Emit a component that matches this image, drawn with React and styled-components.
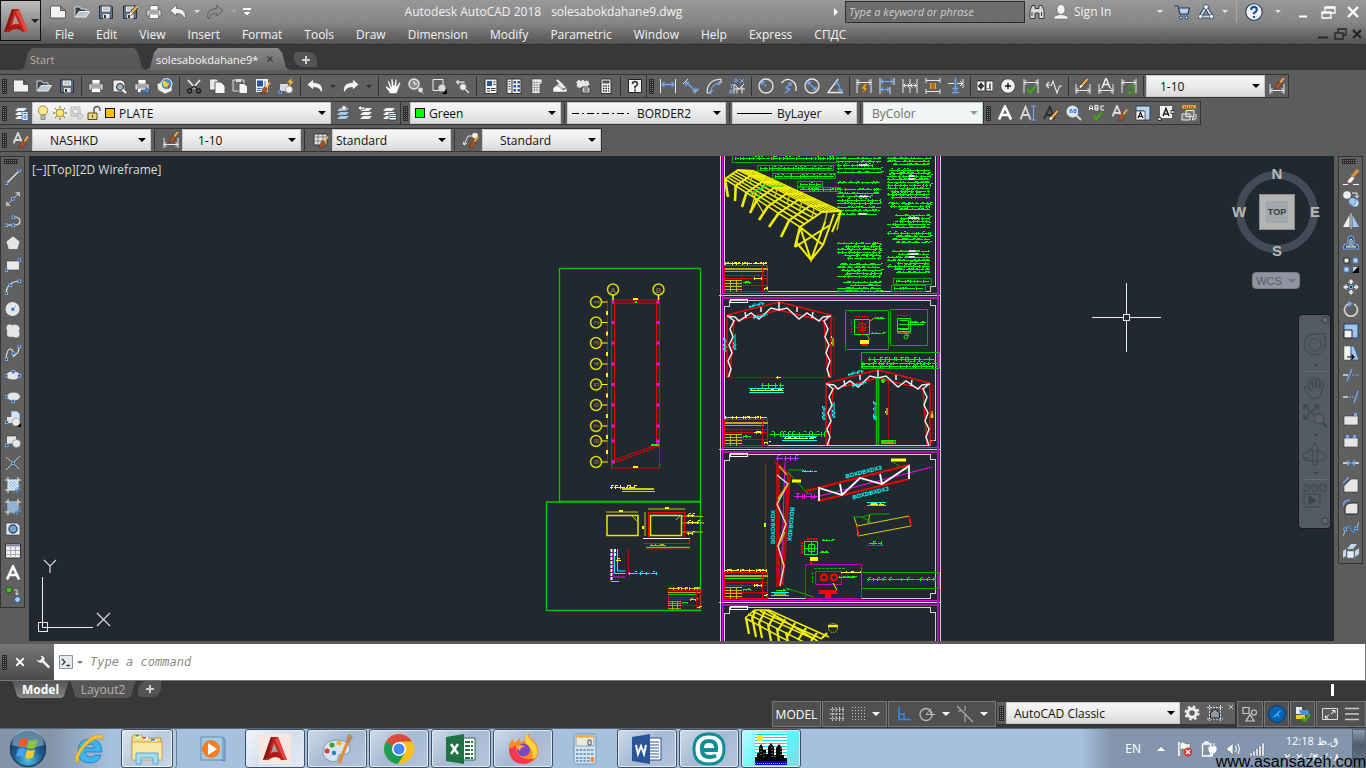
import React from "react";
import styled, { createGlobalStyle } from "styled-components";

const GlobalStyle = createGlobalStyle`
  * { box-sizing: border-box; }
  body {
    margin: 0;
    background: #383838;
    font-family: "Open Sans", "Noto Sans", sans-serif;
    font-size: 12px;
    color: #f2f2f2;
  }
  button, input, select { font: inherit; color: inherit; margin: 0; }
  button {
    padding: 0;
    border: 0;
    background: none;
    display: flex;
    align-items: center;
    justify-content: center;
  }
  svg { flex: none; display: block; }
`;

const Screen = styled.div`
  min-height: 100vh;
  display: flex;
  flex-direction: column;
  overflow: hidden;
`;

const Caret = styled.span`
  flex: none;
  width: 0;
  border: ${(p) => (p.$big ? 4 : 3)}px solid transparent;
  border-top-color: ${(p) => p.$color};
  border-bottom: 0;
`;

const TitleBar = styled.header`
  display: flex;
  height: 45px;
  border-bottom: 1px solid #2c2c2c;
  background: repeating-linear-gradient(135deg, rgba(255, 255, 255, 0.05) 0 1px, transparent 1px 3px),
    linear-gradient(#969696, #858585 50%, #505050);
`;

const AppButton = styled.button`
  && {
    width: 41px;
    height: 41px;
    gap: 2px;
    border: 1px solid #111;
    background: linear-gradient(#bdbdbd, #8d8d8d 60%, #6c6c6c);
  }
`;

const TitleRows = styled.div`
  flex: 1;
  min-width: 0;
`;

const TitleRow = styled.div`
  display: flex;
  align-items: center;
  height: 23px;
  &:last-child { height: 22px; }
`;

const QuickAccess = styled.div`
  display: flex;
  align-items: center;
  padding-left: 5px;
`;

const QuickButton = styled.button`
  width: 24px;
  height: 22px;
`;

const HelpButton = styled(QuickButton)`
  && { width: 34px; }
`;

const Drop = styled.button`
  width: 13px;
  height: 20px;
`;

const Customize = styled.span`
  width: 8px;
  height: 7px;
  border-top: 2px solid #fff;
  background: linear-gradient(#fff, #fff) center 2px / 6px 1px no-repeat,
    linear-gradient(#fff, #fff) center 3px / 4px 1px no-repeat,
    linear-gradient(#fff, #fff) center 4px / 2px 1px no-repeat;
`;

const Title = styled.h1`
  flex: 1;
  display: flex;
  justify-content: center;
  gap: 10px;
  margin: 0;
  font-size: 12px;
  font-weight: 400;
  white-space: nowrap;
`;

const SearchArrow = styled.span`
  border: 4px solid transparent;
  border-left-color: #fff;
  border-right: 0;
  margin-right: 7px;
`;

const Search = styled.input`
  && {
    width: 180px;
    height: 22px;
    padding: 0 3px;
    border: 1px solid #2e2e2e;
    background: #6c6c6c;
    font-size: 11px;
    font-style: italic;
  }
  &::placeholder { color: #cfcfcf; opacity: 1; }
`;

const SignIn = styled.button`
  && {
    width: 121px;
    gap: 5px;
    justify-content: flex-start;
    padding: 0 7px 0 4px;
  }
  span:nth-child(2) { flex: 1; text-align: left; white-space: nowrap; }
`;

const Rule = styled.span`
  width: 1px;
  height: 22px;
  margin-left: 5px;
  background: #a8a8a8;
`;

const WindowButtons = styled.div`
  display: flex;
  gap: ${(p) => p.$gap}px;
  margin-left: auto;
  padding-right: ${(p) => (p.$gap > 1 ? 5 : 1)}px;
  padding-left: 11px;
`;

const MenuBar = styled.nav`
  display: flex;
  padding-left: 3px;
`;

const MenuItem = styled.button`
  && {
    padding: 0 11px;
    white-space: nowrap;
  }
`;

const FileTabs = styled.div`
  display: flex;
  align-items: flex-end;
  height: 25px;
  padding-left: 20px;
  background: #383838;
`;

const FileTab = styled.button`
  && {
    width: ${(p) => p.$width}px;
    height: 22px;
    justify-content: flex-start;
    gap: 8px;
    padding-left: 10px;
    font-size: 11px;
    color: ${(p) => (p.$active ? "#f6f6f6" : "#b9adad")};
    background: ${(p) => (p.$active ? "linear-gradient(#8a8a8a, #666)" : "linear-gradient(#5c5c5c, #545454)")};
    clip-path: polygon(0 100%, 4px 90%, 8px 20%, 12px 0, calc(100% - 12px) 0, calc(100% - 8px) 20%, calc(100% - 4px) 90%, 100% 100%);
  }
`;

const AddTab = styled.button`
  && {
    width: 23px;
    height: ${(p) => (p.$low ? 16 : 15)}px;
    margin: ${(p) => (p.$low ? "0 0 0 1px" : "0 0 3px 4px")};
    background: #545454;
    border-radius: ${(p) => (p.$low ? "9px 0 9px 3px" : "3px 9px 0 9px")};
  }
`;

const Toolbars = styled.div`
  display: flex;
  flex-direction: column;
  gap: 3px;
  height: 85px;
  padding-top: 4px;
  background: #5c5c5c;
`;

const ToolbarRow = styled.div`
  display: flex;
`;

const Toolbar = styled.div`
  display: flex;
  align-items: center;
  height: 24px;
  border: 1px solid #333;
  border-left-width: 0;
  background: #606060;
`;

const Handle = styled.span`
  flex: none;
  width: ${(p) => (p.$flat ? 14 : 5)}px;
  height: ${(p) => (p.$flat ? 5 : 15)}px;
  margin: ${(p) => (p.$flat ? "2px 0 2px 3px" : "0 2px")};
  background: repeating-linear-gradient(90deg, #2a2a2a 0 1px, transparent 1px 2px),
    repeating-linear-gradient(#2a2a2a 0 1px, #777 1px 2px);
`;

const ToolButton = styled.button`
  width: 23px;
  height: 22px;
`;

const Sep = styled.span`
  flex: none;
  width: 1px;
  height: 20px;
  margin: 0 ${(p) => (p.$wide ? 4 : 2)}px 0 3px;
  background: #333;
`;

const ComboBox = styled.div`
  display: flex;
  align-items: center;
  width: ${(p) => p.$width}px;
  height: 22px;
  padding: 0 4px 0 2px;
  border: 1px solid #c9c9c9;
  background: ${(p) => (p.$disabled ? "#f2f5f5" : "linear-gradient(#f6f6f6, #ececec 50%, #d8dadb)")};
  color: ${(p) => (p.$disabled ? "#6e6e6e" : "#101010")};
`;

const ComboSelect = styled.select`
  && {
    flex: 1;
    min-width: 0;
    height: 20px;
    padding: 0 0 0 ${(p) => p.$indent || 0}px;
    border: 0;
    background: none;
    appearance: none;
    opacity: 1;
  }
`;

const LayerState = styled.span`
  display: flex;
  align-items: center;
  gap: 1px;
  padding-right: 4px;
`;

const Swatch = styled.i`
  width: 10px;
  height: 10px;
  margin-left: 2px;
  border: 1px solid #111;
  background: ${(p) => p.$color};
`;

const LineSample = styled.i`
  width: ${(p) => p.$width}px;
  height: 1px;
  margin: 0 5px 0 2px;
  background: ${(p) => (p.$dashed ? "repeating-linear-gradient(90deg, #000 0 7px, transparent 7px 10px, #000 10px 12px, transparent 12px 15px)" : "#000")};
`;

const Workspace = styled.main`
  flex: 1;
  display: flex;
  align-items: flex-start;
  gap: 4px;
  padding: 1px 3px 0 0;
  min-height: 480px;
  background: #5c5c5c;
`;

const SideBar = styled.div`
  flex: none;
  display: flex;
  flex-direction: column;
  width: 25px;
  padding-bottom: 1px;
  border: 1px solid #333;
  background: #606060;
`;

const SideButton = styled.button`
  height: 22px;
`;

const Canvas = styled.section`
  position: relative;
  flex: 1;
  align-self: stretch;
  min-width: 0;
  background: #21282f;
  overflow: hidden;
`;

const DrawingSvg = styled.svg`
  position: absolute;
  inset: 0;
  width: 100%;
  height: 100%;
`;

const DrawText = styled.text`
  font-family: "Liberation Sans", sans-serif;
  font-size: ${(p) => (p.$fill ? 6 : 8)}px;
  font-weight: ${(p) => (p.$fill ? 700 : 400)};
  text-anchor: middle;
  fill: ${(p) => p.$fill || "#b08060"};
`;

const ViewLabel = styled.div`
  position: absolute;
  top: 6px;
  left: 3px;
  line-height: 16px;
  color: #dcdcdc;
`;

const CubePanel = styled.div`
  position: absolute;
  top: 10px;
  right: 11px;
  display: flex;
  flex-direction: column;
  align-items: center;
  gap: 14px;
`;

const CubeLetter = styled.text`
  font: bold 15px "Liberation Sans", sans-serif;
  fill: #b8b8b8;
  text-anchor: middle;
`;

const CubeTop = styled.text`
  font: bold 9px "Liberation Sans", sans-serif;
  fill: #363c42;
  text-anchor: middle;
`;

const Wcs = styled.button`
  && {
    width: 48px;
    height: 17px;
    margin-right: 2px;
    gap: 6px;
    border: 1px solid #7b7d88;
    border-radius: 4px;
    background: #9293a0;
    color: #5a5c66;
    font: 11px "Liberation Sans", sans-serif;
  }
`;

const NavBar = styled.div`
  position: absolute;
  top: 158px;
  right: 3px;
  padding-bottom: 1px;
  border: 1px solid #14191e;
  border-radius: 4px;
  background: #555b63;
`;

const CommandLine = styled.div`
  display: flex;
  align-items: center;
  height: 40px;
  border-top: 3px solid #5c5c5c;
  border-bottom: 1px solid #777;
  border-right: 1px solid #777;
  background: #fff;
  gap: 3px;
`;

const CommandTools = styled.div`
  display: flex;
  align-items: center;
  align-self: stretch;
  width: 54px;
  margin-right: 1px;
  background: linear-gradient(#777, #4a4a4a);
`;

const CommandInput = styled.input`
  && {
    flex: 1;
    margin-left: 2px;
    border: 0;
    outline: 0;
    background: none;
    font: italic 12px "DejaVu Sans Mono", monospace;
    color: #333;
  }
  &::placeholder { color: #8a8a80; opacity: 1; }
`;

const LayoutTabs = styled.div`
  display: flex;
  height: 18px;
  padding-left: 12px;
  background: #383838;
`;

const LayoutTab = styled.button`
  && {
    width: ${(p) => p.$width}px;
    height: 17px;
    margin-right: 1px;
    color: ${(p) => (p.$active ? "#fff" : "#b9adad")};
    font-weight: ${(p) => (p.$active ? 700 : 400)};
    background: ${(p) => (p.$active ? "linear-gradient(#555, #858585)" : "#555")};
    clip-path: polygon(0 0, 2px 30%, 5px 90%, 8px 100%, calc(100% - 8px) 100%, calc(100% - 5px) 90%, calc(100% - 2px) 30%, 100% 0);
  }
`;

const Spacer = styled.span`
  flex: 1;
`;

const ScrollMark = styled.span`
  width: 3px;
  height: 12px;
  margin: 3px 32px 0 0;
  background: #fff;
`;

const StatusBar = styled.footer`
  display: flex;
  justify-content: flex-end;
  gap: 1px;
  height: 29px;
  padding-top: 2px;
  background: #383838;
`;

const StatusGroup = styled.div`
  display: flex;
  align-items: center;
  justify-content: space-evenly;
  width: ${(p) => p.$width}px;
  height: 26px;
  border: 1px solid #777;
  background: #505050;
`;

const StatusText = styled.button`
  && { color: #fff; }
`;

const TinyClose = styled.button`
  && {
    width: 9px;
    height: 22px;
    align-items: flex-start;
    padding-top: 2px;
  }
`;

const TaskBar = styled.nav`
  position: relative;
  display: flex;
  align-items: center;
  height: 40px;
  border-top: 1px solid #5a6572;
  background: linear-gradient(90deg, #8294a9 0 50px, #a7c0dd 110px, #a7c0dd calc(100% - 285px), #8396ad calc(100% - 255px));
`;

const StartButton = styled.button`
  && { width: 55px; margin-right: 3px; }
`;

const TaskSlot = styled.div`
  display: flex;
  width: 62px;
  height: 39px;
  padding-left: 1px;
`;

const stateFill = {
  open: "linear-gradient(135deg, #cfdbe9, #a5b9d2 50%, #b4c7dd)",
  stack: "linear-gradient(135deg, #dde6f0, #b9cadd 50%, #c9d7e6)",
  active: "linear-gradient(135deg, #f4f7fa, #d3dfec 50%, #e3ebf3)",
  flash: "linear-gradient(135deg, #b4ffff, #5cf4fb 60%, #86d8e4)",
};

const TaskButton = styled.button`
  && {
    width: ${(p) => (p.$state === "stack" ? 52 : 60)}px;
    height: 39px;
    border: 1px solid ${(p) => (p.$state ? "#3f5064" : "transparent")};
    border-radius: 3px;
    background: ${(p) => stateFill[p.$state] || "none"};
    box-shadow: ${(p) => {
      if (!p.$state) return "none";
      return p.$state === "stack" ? "inset 0 0 0 1px #eaf1f8, 3px 0 0 #b5c8de, 4px 0 0 #6b7f96" : "inset 0 0 0 1px #dfe9f3";
    }};
  }
`;

const Plate = styled.span`
  padding: 2px 3px;
  background: #f8e6e1;
`;

const Tray = styled.div`
  display: flex;
  align-items: center;
  gap: 8px;
`;

const Lang = styled.span`
  margin-right: 8px;
  color: #fff;
`;

const UpMark = styled.i`
  border: 4px solid transparent;
  border-bottom-color: #fff;
  border-top: 0;
  margin-right: 4px;
`;

const Clock = styled.div`
  display: flex;
  flex-direction: column;
  align-items: center;
  width: 80px;
  margin-left: 7px;
  font: 11px/16px "Open Sans", "DejaVu Sans", sans-serif;
  color: #fff;
  white-space: nowrap;
  span { height: 16px; }
`;

const ShowDesktop = styled.button`
  && {
    width: 14px;
    height: 39px;
    border: 1px solid #556476;
    background: linear-gradient(#8d9cae, #4e5b6b 40%, #6d7b8d);
  }
`;

const Watermark = styled.div`
  position: absolute;
  right: 0;
  bottom: -4px;
  font: 16px/20px "Liberation Sans", sans-serif;
  color: #000;
`;

const L = "#e9e9e9";
const B = "#6fa8f5";
const D = "#3a3a3a";
const O = "#f0a020";
const G = "#3fa314";
const Y = "#ffff00";
const R = "#ff0000";
const N = "#00ff00";
const C = "#00ffff";
const M = "#ff00ff";

/* ---------- icon parts ---------- */

const Printer = () => (
  <>
    <path d="M4 1.5h8v5H4z" fill="#fff" stroke={D} strokeWidth=".6" />
    <path d="M1 6h14v6H1z" fill="#d4d8dc" stroke={D} strokeWidth=".5" />
    <path d="M3.5 10h9v4.5h-9z" fill="#fff" stroke="#555" strokeWidth=".7" />
    <path d="M3 8h10" stroke="#777" />
  </>
);

const Disk = () => (
  <>
    <path d="M1.5 2h12l1 1V14.5h-13z" fill="#5d6e85" stroke="#2a3038" />
    <path d="M4 2.5h8v5H4z" fill="#f4f4f4" />
    <path d="M5 4h6M5 5.7h6" stroke="#888" strokeWidth=".7" />
    <path d="M5 10h6.5v4.5H5z" fill="#e4e4e4" />
    <path d="M6 11h2v3H6z" fill="#333" />
  </>
);

const Brush = ({ x = 0, y = 0 }) => (
  <g transform={`translate(${x} ${y})`}>
    <path d="M15 4.5L11 10" stroke="#ffb13b" strokeWidth="1.8" />
    <path d="M10 8.5l2.500 2.500c-1 4.500-4 5-7 4.500 2-1 1-5 4.500-7z" fill="#a8542a" stroke="#4a2410" strokeWidth=".5" />
  </g>
);

const Pencil = ({ x = 0, y = 0 }) => (
  <g transform={`translate(${x} ${y})`}>
    <path d="M6 13.5L13.5 5" stroke="#303030" strokeWidth="3.6" />
    <path d="M7 12.5L13.5 5" stroke="#f7b24a" strokeWidth="2.3" />
    <path d="M6 13.5l1.5-1.7" stroke="#fff" strokeWidth="2.2" />
  </g>
);

const Dim = () => (
  <path d="M1 6v10M15 6v10M1 12.5h14M3.5 10L1 12.5 3.500 15M12.500 10l2.500 2.500-2.500 2.500" fill="none" stroke={L} />
);

const DimTop = () => (
  <path d="M1 1v14M15 1v14M1 4.5h14M3.5 2L1 4.500 3.500 7M12.500 2L15 4.500 12.500 7" fill="none" stroke={L} />
);

const Layers = ({ c = "#f0f0f0" }) => (
  <>
    <path d="M5 10.5h10l-4 4H1z" fill={c} stroke="#444" strokeWidth=".7" />
    <path d="M5 6.5h10l-4 4H1z" fill={c} stroke="#444" strokeWidth=".7" />
    <path d="M5 2.5h10l-4 4H1z" fill={c} stroke="#444" strokeWidth=".7" />
  </>
);

const Grip = ({ at }) => at.map(([x, y]) => (
  <rect key={`${x}-${y}`} x={x - 1} y={y - 1} width="2.600" height="2.600" fill="#1d3557" stroke="#7fb6ff" strokeWidth=".9" />
));

const Undo = ({ c = "#f0f0f0" }) => (
  <path d="M0 6.5L6.500 1v3.500c5 0 9 2 9 8l-1.500 2.500c-.5-4-3-5.500-7.500-5.500V12z" fill={c} stroke="#444" strokeWidth=".6" />
);

const icons = {
  new: <path d="M.5 2h10l5 4.500v7.500H.5z M10.500 2v4.500h5" fill="#f2f2f2" stroke="#444" strokeWidth=".8" />,
  open: (
    <>
      <path d="M1 13V3h5l1 2h5v3" fill="#3a4046" stroke="#cdd8e2" />
      <path d="M1.5 13L5 7.5h10.500L12 13z" fill="#b9c6d1" stroke="#e8eef3" />
    </>
  ),
  save: <Disk />,
  saveas: <><Disk /><Pencil x={2} y={-3} /></>,
  print: <Printer />,
  preview: (
    <>
      <path d="M2 2h9l3 3v9H2z" fill="#eee" stroke="#444" />
      <circle cx="9" cy="9" r="3.500" fill="#9fb3c4" stroke="#222" />
      <path d="M11.5 11.5L15 15" stroke="#fff" strokeWidth="2" />
    </>
  ),
  publish: <><Printer /><path d="M7 12h5V9.500l4 3.700-4 3V14H7z" fill="#4d8fe8" stroke="#16345f" strokeWidth=".6" /></>,
  globe: (
    <>
      <path d="M0 6l5-2 10 2v7l-7 3-7-4z" fill="#f2f2f2" stroke="#555" strokeWidth=".6" />
      <circle cx="9.500" cy="6" r="5.500" fill="#3f8fd6" stroke="#e8f2ff" />
      <path d="M6 3c3-1 3 2 5 2s1 4-2 4-4-3-3-6z" fill="#f3c83c" />
      <path d="M11 7l2 1-2 3z" fill="#d23b2c" />
    </>
  ),
  cut: (
    <>
      <path d="M2 2l8 9M14 2L6 11" stroke="#efefef" strokeWidth="1.700" />
      <path d="M8 8l3 3M8 8l-3 3" stroke="#1b1b1b" strokeWidth="1.500" />
      <circle cx="3.500" cy="13" r="2" fill="none" stroke="#1b1b1b" strokeWidth="1.300" />
      <circle cx="12.500" cy="13" r="2" fill="none" stroke="#1b1b1b" strokeWidth="1.300" />
    </>
  ),
  copy: (
    <>
      <path d="M.5 1h7l2 2V12h-9z" fill="#e6e6e6" stroke="#444" strokeWidth=".8" />
      <path d="M6 4h6l4 4V15.500H6z" fill="#f6f6f6" stroke="#444" strokeWidth=".8" />
    </>
  ),
  paste: (
    <>
      <path d="M1 2h11v11H1z" fill="#6b6b6b" stroke="#ddd" />
      <path d="M4 1h5v3H4z" fill="#ddd" />
      <path d="M7 5.500h5l3.500 3V15.500H7z" fill="#f6f6f6" stroke="#444" strokeWidth=".8" />
    </>
  ),
  match: (
    <>
      <path d="M1 1h12v13H1z" fill="#f3f3f3" />
      <path d="M2 2.500h6v6H2z" fill="#25559c" />
      <path d="M10 3v5M2 10.500h5M2 12.500h4" stroke="#3e76bb" />
      <Brush />
    </>
  ),
  block: (
    <>
      <path d="M2 6h8v7H2z" fill="#d7dde3" />
      <circle cx="11" cy="11.500" r="3.500" fill="#f4f4f4" stroke="#888" strokeWidth=".6" />
      <Grip at={[[2, 13.500]]} />
      <path d="M14 0l-5 4.500h3L10 9l6-5.500h-3z" fill="#ffb52b" />
    </>
  ),
  undo: <Undo />,
  redo: <g transform="matrix(-1 0 0 1 16 0)"><Undo /></g>,
  redoDim: <g transform="matrix(-1 0 0 1 16 0)"><Undo c="#8b8b8b" /></g>,
  pan: (
    <path
      d="M5 15.500L.5 9l1-1L5 10.500 2.500 3.500l1.400-.7L6.500 8.500 6 1h1.700L9 8l1.500-7 1.500.4L11.500 8.500 14.500 4l1.200 1L13 12l-1.500 3.500z"
      fill="#fff"
      stroke="#555"
      strokeWidth=".5"
    />
  ),
  zoom: (
    <>
      <circle cx="6" cy="6" r="5" fill="#8b8b8b" stroke="#e4e4e4" strokeWidth="1.500" />
      <path d="M6 3v3h3" fill="none" stroke="#fff" />
      <circle cx="12.500" cy="12" r="2.400" fill="#dbe1e6" />
      <path d="M14 14l1.500 1.500" stroke="#ccc" />
    </>
  ),
  zoomWin: (
    <>
      <path d="M2 1.500h10v11H2z" fill="none" stroke="#eee" />
      <circle cx="11" cy="10" r="3.600" fill="#dcdcdc" />
      <path d="M11 16h5v-5z" fill="#000" />
    </>
  ),
  zoomPrev: (
    <>
      <path d="M1 4l4-3.500V3h6v2.500H5V8z" fill="#c9c9c9" stroke="#444" strokeWidth=".5" />
      <circle cx="9" cy="9" r="3" fill="#eee" stroke="#bbb" />
      <path d="M11 11l4 4" stroke="#ddd" strokeWidth="1.500" />
    </>
  ),
  props: (
    <>
      <path d="M2 1h12v14.500H2z" fill="#f4f4f4" stroke="#333" />
      <path d="M4 3h5v5H4z" fill="#25559c" />
      <path d="M10.500 4h2M10.500 6.500h2M4 10.500h3M4 13h3M8 10.500h4.500M8 12.500h4.500" stroke="#333" />
    </>
  ),
  design: (
    <>
      <path d="M1 1h14v14.500H1z" fill="#f0f0f0" stroke="#333" />
      <path d="M6 1v14" stroke="#333" />
      <path d="M7.500 3h2.500v2.500H7.500zM11.500 3H14v2.500h-2.500zM7.500 7h2.500v2.500H7.500zM11.500 7H14v2.500h-2.500zM7.500 11h2.500v2.500H7.500zM11.500 11H14v2.500h-2.500z" fill="#25559c" />
      <path d="M2.500 3.500h2M2.500 6h2M2.500 8.500h2M2.500 11h2" stroke="#444" />
    </>
  ),
  palette: (
    <>
      <path d="M3 1h10v5h-2v9.500H3z" fill="#f0f0f0" stroke="#444" strokeWidth=".7" />
      <path d="M5.500 3v11M8 3v11M3 4.500h9M3 7h8M3 9.500h8M3 12h8" stroke="#999" strokeWidth=".8" />
    </>
  ),
  sheets: (
    <>
      <path d="M4 7l5-3 4 5-3 3z" fill="#d9d9d9" stroke="#444" strokeWidth=".5" />
      <path d="M1 10l4-3 6 5 4-2v4H1z" fill="#fff" stroke="#444" strokeWidth=".5" />
      <path d="M5 2l8 8" stroke="#eee" strokeWidth="2.200" />
    </>
  ),
  markup: (
    <>
      <path d="M2 3q2-3 4 0 2-3 4 0 3-2 4 1 2 3-1 4v2H4q-4-1-2-4-2-2 0-3z" fill="#e5e5e5" stroke="#555" strokeDasharray="2 1" />
      <path d="M7 9h8v6H7z" fill="#f2f2f2" stroke="#333" />
      <path d="M8.500 11h5M8.500 13h5" stroke="#333" />
    </>
  ),
  calc: (
    <>
      <path d="M3 1h10v14.500H3z" fill="#f0f0f0" stroke="#333" />
      <path d="M4.500 2.500h7v3h-7z" fill="#555" />
      <path d="M5 8h6M5 10.500h6M5 13h6" stroke="#333" strokeWidth="1.400" strokeDasharray="1.500 1" />
    </>
  ),
  help: (
    <>
      <path d="M1.500 1.500h13v13h-13z" fill="#f4f4f4" stroke="#222" />
      <path d="M5.500 6q0-2.500 2.500-2.500T10.500 6Q10.500 7.500 8 8.500V10.500M8 11.500v2" stroke="#333" strokeWidth="1.700" fill="none" />
    </>
  ),
  dimLinear: (
    <>
      <path d="M.5 1v14M15.500 1v14" stroke={L} />
      <path d="M2 6.500h12M4.500 4L2 6.500 4.500 9M11.500 4L14 6.500 11.500 9" fill="none" stroke={B} strokeWidth="1.300" />
    </>
  ),
  dimAligned: (
    <>
      <path d="M0 6l5-5M11 15.500l5-5" stroke={L} />
      <path d="M3 4.500l10 8.500M3 8V4.500h3.500M9.500 13H13V9.500" fill="none" stroke={B} strokeWidth="1.300" />
    </>
  ),
  dimArc: (
    <>
      <path d="M1 15Q1 2 15 1M1 15h4M15 1v4" fill="none" stroke={L} strokeWidth="1.200" />
      <path d="M5 14Q5 6 14 5M3.500 12L5 14.500 7 12M12 3.500L14.500 5 12 7" fill="none" stroke={B} strokeWidth="1.200" />
    </>
  ),
  dimOrd: (
    <>
      <path d="M5 15.500V6l5 5 5-5M5 11h11M8 15.500v-6M13 15.500V8" fill="none" stroke={L} />
      <path d="M1 6l1.500 2L4 6M2.500 8v2M11 1l4 4M15 1l-4 4M1 12h2v3H1zM6 1h2v3H6z" fill="none" stroke={B} />
    </>
  ),
  dimRadius: (
    <>
      <circle cx="8" cy="8" r="7" fill="none" stroke={L} strokeWidth="1.300" />
      <path d="M8.500 8.500L3.500 3.500M3.500 7V3.500H7" fill="none" stroke={B} strokeWidth="1.200" />
    </>
  ),
  dimJog: (
    <>
      <path d="M.5 5q5-6 11-2 5 4 3 10" fill="none" stroke={L} strokeWidth="1.300" />
      <path d="M4 15l5-4-4-1 5-5M7 5h3v3" fill="none" stroke={B} strokeWidth="1.200" />
    </>
  ),
  dimDia: (
    <>
      <circle cx="8" cy="8" r="7" fill="none" stroke={L} strokeWidth="1.300" />
      <path d="M4 4l8 8M4 7.500V4h3.500M8.500 12H12V8.500" fill="none" stroke={B} strokeWidth="1.200" />
    </>
  ),
  dimAngle: (
    <>
      <path d="M11 1L1 14.500h15" fill="none" stroke={L} strokeWidth="1.300" />
      <path d="M9 4q4 3 4.500 9M8.500 7V4h3M11 11l2.500 2.500L15.500 11" fill="none" stroke={B} strokeWidth="1.200" />
    </>
  ),
  dimQuick: <><DimTop /><path d="M9 5.500L5 11h3l-2 5 6-6.500H9l2-4z" fill={O} stroke="#7a4a00" strokeWidth=".4" /></>,
  dimBase: (
    <>
      <path d="M1 0v16M15 0v7M11 9v7" stroke={L} />
      <path d="M2 3.500h12M4 1.500l-2 2 2 2M12 1.500l2 2-2 2M2 11.500h8M4 9.500l-2 2 2 2M8 9.500l2 2-2 2" fill="none" stroke={B} strokeWidth="1.200" />
    </>
  ),
  dimCont: <path d="M1 1v14M8 1v14M15 1v14M1 7.500h14M3.500 5.500l-2 2 2 2M5.500 5.500l2 2-2 2M10.500 5.500l-2 2 2 2M12.500 5.500l2 2-2 2" fill="none" stroke={L} />,
  dimSpace: (
    <>
      <path d="M1 2.500h14M1 13.500h14M1 0v5M15 0v5M1 11v5M15 11v5" stroke={L} />
      <path d="M5 5h6v6H5z" fill={O} />
      <path d="M7 5v6M9 5v6" stroke="#7a4a00" />
    </>
  ),
  dimBreak: (
    <>
      <path d="M0 5.500h6M9 5.500h6M15 1v9M12 3l2.500 2.500L12 8" fill="none" stroke={L} />
      <path d="M7.500 0v13M4.500 10.500h6M4 14.500h7" stroke={B} strokeWidth="1.500" />
    </>
  ),
  tol: (
    <>
      <path d="M0 3h8v10H0zM9 3h7v10H9z" fill="#f4f4f4" stroke="#222" strokeWidth=".8" />
      <path d="M4 4.500v7M1 8h6M13 5.500v6M10.500 10.500h1" stroke="#111" strokeWidth="1.200" />
      <circle cx="4" cy="8" r="2" fill="none" stroke="#111" />
    </>
  ),
  center: (
    <>
      <circle cx="8" cy="8" r="7.300" fill="#f2f2f2" stroke="#444" />
      <path d="M8 5v6M5 8h6" stroke="#111" strokeWidth="1.300" />
    </>
  ),
  inspect: <><DimTop /><path d="M4 11l3.500 3.500L13 8" fill="none" stroke={G} strokeWidth="2.400" /></>,
  jogLine: <path d="M0 7h4M3 4L0 7l3 3M5 8l2-5 4 12 2.500-7H16" fill="none" stroke={L} strokeWidth="1.100" />,
  dimEdit: <><Dim /><Pencil x={-1} y={-4} /></>,
  dimText: <><Dim /><path d="M4 10L8 0l4 10M5.500 6.500h5" fill="none" stroke="#f4f4f4" strokeWidth="1.500" /></>,
  dimUpd: <><DimTop /><path d="M8 11a2.500 2.500 0 0 1 5-1M13 13a2.500 2.500 0 0 1-5 1M13 8v2h-2M8 16v-2h2" fill="none" stroke={G} strokeWidth="1.300" /></>,
  dimStyle: <><Dim /><Brush x={0} y={-5} /></>,
  layerProps: (
    <>
      <Layers />
      <path d="M9 6.500h6v9H9z" fill="#e9f1fa" stroke="#2a5ea8" strokeWidth=".8" />
      <path d="M10.500 8.500h3M10.500 11h3M10.500 13h3" stroke="#2a5ea8" />
    </>
  ),
  layerCur: <><Layers c="#a9c8e6" /><circle cx="9" cy="3" r="2.400" fill="#f4f4f4" stroke="#555" strokeWidth=".5" /></>,
  layerPrev: <><Layers /><path d="M0 3l3-3v2h4v2H3v2z" fill="#f4f4f4" stroke="#333" strokeWidth=".5" /></>,
  layerState: (
    <>
      <Layers />
      <path d="M8 8.500h7.500v6.500H8z" fill="#f2f2f2" stroke="#333" strokeWidth=".8" />
      <path d="M9 10.500h6M9 12.500h6" stroke="#3e76bb" />
    </>
  ),
  bulb: (
    <>
      <circle cx="8" cy="5.500" r="4.700" fill="#ffe88a" stroke="#8d7a30" strokeWidth=".8" />
      <path d="M6 10h4v4.500H6z" fill="#bbb" stroke="#666" strokeWidth=".6" />
    </>
  ),
  sun: (
    <>
      <circle cx="8" cy="8" r="4" fill="#ffe566" stroke="#86722c" strokeWidth=".8" />
      <path d="M8 1v2M8 13v2M1 8h2M13 8h2M3 3l1.500 1.500M13 3l-1.500 1.500M3 13l1.500-1.500M13 13l-1.500-1.500" stroke="#6c5f2a" />
    </>
  ),
  vpFreeze: (
    <>
      <path d="M2 2h9v9H2z M4 4h5v5H4z" fill="none" stroke="#b0b0b0" />
      <circle cx="11" cy="11" r="3" fill="#d6d6d6" stroke="#a8a8a8" strokeDasharray="1 1" />
    </>
  ),
  lock: (
    <>
      <path d="M8 8V4.500a3 3 0 0 1 6 0V6" fill="none" stroke="#555" strokeWidth="1.400" />
      <path d="M2 8h9v6.500H2z" fill="#e9d387" stroke="#5c4a15" />
      <path d="M6.500 10v2.500" stroke="#333" />
    </>
  ),
  textStyle: <><path d="M.5 11.500L5 1l4.500 10.500M2 8h6" fill="none" stroke="#dcdcdc" strokeWidth="1.900" /><Brush /></>,
  tableStyle: (
    <>
      <path d="M1 2h13v11H1z" fill="#e8e8e8" stroke="#333" />
      <path d="M1 5h13M1 9h13M5 2v11M10 2v11" stroke="#666" strokeWidth=".8" />
      <Brush />
    </>
  ),
  leaderStyle: (
    <>
      <path d="M1 13L5 4h5M0 9.500L1 13l3-2" fill="none" stroke={L} />
      <circle cx="12" cy="3.500" r="2.800" fill="#eee" />
      <Brush />
    </>
  ),
  mtext: <path d="M2 14.500L8 1.500l6 13M4.500 10h7" fill="none" stroke="#fff" strokeWidth="2.600" />,
  stext: (
    <>
      <path d="M.5 14.500L5.500 2l5 12.500M2.500 10h6" fill="none" stroke="#d4d4d4" strokeWidth="1.900" />
      <path d="M11 1h5M13.500 1v14M11 15h5" stroke={B} strokeWidth="1.200" />
    </>
  ),
  editText: <><path d="M1 14L7 2l4.500 12M4 10h6" fill="none" stroke="#2d2d2d" strokeWidth="1.900" /><Pencil x={1} y={1} /></>,
  find: (
    <>
      <circle cx="6.500" cy="6.500" r="5.500" fill="#dce8f3" stroke="#eee" />
      <path d="M4 8V5l1-1 1 1v3M8 4.500v3h2v-3zM15 4.500h-2.500v3H15" fill="none" stroke="#2c6fd0" />
      <path d="M10 10l5 5" stroke="#ddd" strokeWidth="2" />
    </>
  ),
  spell: (
    <>
      <path d="M.5 5V2l1.500-1.500L3.500 2v3M.5 3.500h3M6 .5v4.500h3V.500H6M6 3h3M15 1h-3v4h3" fill="none" stroke="#fff" />
      <path d="M4 10l3.500 4L13 7.500" fill="none" stroke={G} strokeWidth="2.400" />
    </>
  ),
  scaleText: (
    <>
      <path d="M1 1h14v14H9V6H1z" fill="#b8d6ef" stroke="#24405f" />
      <path d="M1 6h9v9H1z" fill="#f2f2f2" stroke="#333" strokeWidth=".7" />
      <path d="M3 13l2.500-5.500L8 13M4 11.500h3" fill="none" stroke="#111" strokeWidth="1.200" />
    </>
  ),
  justify: (
    <>
      <path d="M2 1h12v12H2z" fill="#f2f2f2" />
      <path d="M5 11l3-7.500 3 7.500M6 9h4" fill="none" stroke="#222" strokeWidth="1.500" />
      <path d="M0 12.500h3v3H0zM13 5.500h3v3h-3z" fill="#eee" stroke="#111" strokeWidth=".8" />
    </>
  ),
  convert: (
    <>
      <path d="M1 0h14v3.500H1z" fill={O} />
      <path d="M3 2h10" stroke="#5c3a00" strokeDasharray="1 1" />
      <path d="M5 5.500h8v6H5zM1 9h8v6H1z" fill="#777" stroke="#eee" />
      <path d="M11 14h4V9M13 12l-2 2 2 1.500" fill="none" stroke="#eee" />
    </>
  ),

  line: <><path d="M2 14L14 2" stroke="#eee" strokeWidth="1.200" /><Grip at={[[1, 14], [14, 1]]} /></>,
  xline: (
    <>
      <path d="M2 14L14 2" stroke="#ccc" />
      <path d="M15 1h-5l5 5zM1 15v-5l5 5z" fill="#bbb" />
      <Grip at={[[7.500, 7.500]]} />
    </>
  ),
  pline: <><path d="M1 12h9q5 0 5-4T9 4" fill="none" stroke="#e4e4e4" strokeWidth="1.200" /><Grip at={[[1, 12], [8, 12], [8, 4]]} /></>,
  polygon: <path d="M8 1l7 5.500-2.500 8h-9L1 6.500z" fill="#e3e5e7" stroke="#4a4a4a" strokeWidth=".6" />,
  rect: <><path d="M1.500 4h13v9h-13z" fill="#e8eaec" stroke="#333" strokeWidth=".6" /><Grip at={[[1, 13], [14, 3]]} /></>,
  arc: <><path d="M1 14Q2 3 14 2" fill="none" stroke="#d8d8d8" strokeWidth="1.200" /><Grip at={[[1, 14], [5, 6], [14, 2]]} /></>,
  circle: <><circle cx="7.500" cy="8" r="7" fill="#e3e5e7" /><path d="M8 8l3-3" stroke={B} /><Grip at={[[7.500, 8]]} /></>,
  cloud: <path d="M2 2q3-2 5 0 4-2 7 1 2 3 0 5 2 3 0 6-3 2-6 0-4 1-6-1-1-3 0-5-2-3 0-6z" fill="#e3e5e7" stroke="#4a4a4a" strokeWidth=".5" />,
  spline: <><path d="M1 14Q2 4 5 4T8 9t3 0q3-1 3-8" fill="none" stroke="#e4e4e4" strokeWidth="1.200" /><Grip at={[[1, 14], [8, 8], [14, 1]]} /></>,
  ellipse: <><ellipse cx="8" cy="8.500" rx="7" ry="4" fill="#e3e5e7" /><Grip at={[[1, 8.500], [8, 4.500], [14, 8.500]]} /></>,
  earc: <><ellipse cx="8.500" cy="7.500" rx="6.500" ry="4" fill="#e3e5e7" /><Grip at={[[1, 7.500], [8, 12]]} /></>,
  insert: (
    <>
      <path d="M6 0h6l3 3v8H6z" fill="#cfe3f4" stroke="#3c6080" strokeWidth=".6" />
      <path d="M2 6h8v6H2z" fill="#e3e5e7" />
      <circle cx="11" cy="11" r="4" fill="#e9e9e9" stroke="#888" strokeWidth=".6" />
      <Grip at={[[1.500, 11]]} />
      <path d="M12 16h4v-4z" />
    </>
  ),
  makeBlock: (
    <>
      <path d="M1.500 3h10v8h-10z" fill="#e3e5e7" stroke="#333" strokeWidth=".6" />
      <circle cx="11.500" cy="10.500" r="4" fill="#e9e9e9" stroke="#777" strokeWidth=".6" />
      <Grip at={[[1.500, 12]]} />
    </>
  ),
  point: <><path d="M1 2l7 6 6 6M15 1L1 15" stroke="#c8c8c8" /><Grip at={[[8, 8]]} /></>,
  hatch: (
    <>
      <path d="M3 3h10v10H3z" fill="#9fc4ea" />
      <path d="M3 3l10 10M6 3l7 7M3 6l7 7M9 3l4 4M3 9l4 4" stroke="#fff" strokeWidth=".8" />
      <path d="M3 0v16M13 0v11M0 3h16M0 13h10" stroke="#f2f2f2" />
      <path d="M8 15.500l8-8M12 16v-4h4" stroke={B} fill="none" />
    </>
  ),
  gradient: (
    <>
      <path d="M3 3h10v10H3z" fill="#8fb2d6" stroke="#1f3c5a" />
      <path d="M3 0v16M13 0v11M0 3h16M0 13h10" stroke="#f2f2f2" />
      <path d="M8 15.500l8-8M12 16v-4h4" stroke={B} fill="none" />
    </>
  ),
  region: (
    <>
      <path d="M1 2h11l3 3v9H1z" fill="#e3e5e7" stroke="#333" strokeWidth=".6" />
      <circle cx="8" cy="8" r="4" fill="#7fa3c8" stroke="#1f4f80" strokeWidth="1.400" />
    </>
  ),
  table: (
    <>
      <path d="M.5 1h15v14H.5z" fill="#f2f2f2" stroke="#333" />
      <path d="M1 1.500h14v2H1z" fill="#8a8ca6" />
      <path d="M1 7.500h14M1 11.500h14M5.500 4v11M10.500 4v11" stroke="#aaa" />
    </>
  ),
  addSel: (
    <>
      <circle cx="4" cy="3" r="3" fill="#5cb531" stroke="#1e5a08" />
      <path d="M9 3h3v4M10.500 6l1.500 2 1.500-2" fill="none" stroke="#ddd" />
      <circle cx="12.500" cy="12.500" r="3" fill="#a7d0f5" stroke="#1d4f88" />
    </>
  ),

  erase: (
    <>
      <path d="M9 8l6-7" stroke="#e9902d" strokeWidth="3" />
      <path d="M5 11l4-4 3 2-4 5H4z" fill="#fff" stroke="#8a4c2b" strokeWidth=".7" />
      <path d="M0 15.500h5M10 15.500h6" stroke="#fff" />
    </>
  ),
  copyObj: (
    <>
      <circle cx="4" cy="4" r="3.800" fill="#f0f0f0" />
      <path d="M9 2h5v4M12 4.500L14 7l2-2.500" fill="none" stroke="#eee" />
      <circle cx="12" cy="12" r="3.800" fill="#e8f1fb" stroke="#5c92cc" />
      <circle cx="9.500" cy="10.500" r="3.800" fill="#9ec5ee" stroke="#4475ad" strokeWidth=".7" />
    </>
  ),
  mirror: (
    <>
      <path d="M6.500 2v12H0z" fill="#f0f0f0" />
      <path d="M9.500 2v12H16z" fill="#9ec5ee" />
      <path d="M8 0v16" stroke="#ddd" />
    </>
  ),
  offset: (
    <>
      <path d="M.5 14q-1-5 4.500-5V5q0-4 3-4t3 4v4q5.500 0 4.500 5z" fill="#3a4a5c" stroke={B} strokeWidth="1.200" />
      <path d="M3 12h10q-1-1-4-1V5q-1-2-2 0v6q-3 0-4 1z" fill="none" stroke="#e6e6e6" />
    </>
  ),
  array: (
    <>
      <path d="M1 1h5v5H1z" fill="#f2f2f2" stroke="#222" />
      <path d="M10 1h5v5h-5zM1 10h5v5H1z" fill="#b4d4f5" stroke="#3e76bb" />
      <path d="M10 10h5v5h-5z" fill="#b4d4f5" />
      <path d="M9 16h7V9z" />
    </>
  ),
  move: (
    <>
      <path d="M8 0l3 3.500H9V5H7V3.500H5zM8 16l3-3.500H9V11H7v1.500H5zM0 8l3.500-3v2H5v2H3.500v2zM16 8l-3.500-3v2H11v2h1.500v2z" fill="#e4e4e4" />
      <path d="M6.500 6.500h3v3h-3z" fill="#1c3f73" stroke={B} />
    </>
  ),
  rotate: (
    <>
      <path d="M5 3A6.500 6.500 0 1 0 11 3" fill="none" stroke="#cfcfcf" strokeWidth="1.700" />
      <path d="M5 0l5 2.500L5 6z" fill={B} />
    </>
  ),
  scale: (
    <>
      <path d="M1 1h14v14H1z" fill="#9ec5ee" stroke="#22497a" />
      <path d="M1 7h8v8H1z" fill="#f4f4f4" stroke="#222" />
    </>
  ),
  stretch: (
    <>
      <path d="M1 1h7v14H1z" fill="#f4f4f4" stroke="#444" strokeWidth=".5" />
      <path d="M8 1h3l5 14H8z" fill="#9ec5ee" stroke="#22497a" strokeWidth=".7" />
      <path d="M4 12h7M8.500 9.500L11 12l-2.500 2.500" fill="none" stroke="#000" strokeWidth="1.200" />
    </>
  ),
  trim: <><path d="M0 8h5" stroke="#eee" strokeWidth="1.300" /><path d="M4 14L9 2" stroke={B} strokeWidth="1.400" /><path d="M9 8h7" stroke={B} strokeDasharray="2.500 1.500" /></>,
  extend: <><path d="M0 8h5" stroke="#eee" strokeWidth="1.300" /><path d="M11 14l4-12" stroke={B} strokeWidth="1.400" /><path d="M6 8h6" stroke={B} strokeDasharray="2 1" /></>,
  breakAt: <><path d="M1 5h14v9H1z" fill="#e3e5e7" stroke="#333" strokeWidth=".6" /><path d="M11 2h3v3h-3z" fill={B} /></>,
  breakIt: <><path d="M1 5h14v9H1z" fill="#e3e5e7" stroke="#333" strokeWidth=".6" /><path d="M3 2h3v3H3zM10 2h3v3h-3z" fill={B} /></>,
  join: <><path d="M0 8h5M11 8h5" stroke="#eee" strokeWidth="1.300" /><path d="M4 5l4 3-4 3zM12 5L8 8l4 3z" fill={B} /></>,
  chamfer: <><path d="M1 15V9l7-7h7v13z" fill="#e3e5e7" stroke="#333" strokeWidth=".6" /><path d="M0 6l6-6" stroke={B} strokeWidth="1.500" /></>,
  fillet: <><path d="M2 15V9q1-5 7-5h6v11z" fill="#e3e5e7" stroke="#222" /><path d="M0 7q1-6 7-6" fill="none" stroke={B} strokeWidth="1.700" /></>,
  blend: (
    <>
      <path d="M0 15L3 8M13 8l3-7" stroke="#bbb" />
      <path d="M3 8q3-6 5 0t5 0" fill="none" stroke="#2a8fe0" strokeWidth="1.400" />
      <Grip at={[[2, 8], [13, 7]]} />
    </>
  ),
  explode: (
    <>
      <path d="M4 6l4-5h6l-4 5zM0 8l3-2v7l-3 2zM12 8l4-3v6l-4 3z" fill="#c5d6e6" />
      <path d="M4 8h7v7H4z" fill="#e6edf4" stroke="#5f7d9b" strokeWidth=".6" />
    </>
  ),

  binoculars: (
    <path d="M1 14.500V7l2-5.500h3v3h4v-3h3L15 7v7.500h-5V9H6v5.500z M3 8v4 M12.500 8v4" fill="#d8d8d8" stroke="#2f2f2f" strokeWidth=".9" />
  ),
  user: (
    <>
      <ellipse cx="8" cy="5.500" rx="4" ry="5" fill="#f2f2f2" stroke="#555" strokeWidth=".5" />
      <path d="M.5 15q0-4 7.500-4.500 7.500.5 7.500 4.500z" fill="#f2f2f2" stroke="#555" strokeWidth=".5" />
    </>
  ),
  cart: (
    <>
      <path d="M0 2h4l2 8h8l1.500-6H5" fill="#bcd0e8" stroke="#1f3555" strokeWidth="1.200" />
      <circle cx="7" cy="13.500" r="1.500" fill="#dce8f5" stroke="#1f3555" />
      <circle cx="12.500" cy="13.500" r="1.500" fill="#dce8f5" stroke="#1f3555" />
    </>
  ),
  a360: (
    <>
      <path d="M8 3L2.500 12.500h11z" fill="none" stroke="#1f3555" strokeWidth="3.600" />
      <path d="M8 3L2.500 12.500h11z" fill="none" stroke="#d5e0ed" strokeWidth="2" />
      <circle cx="8" cy="3" r="2.400" fill="#f0f4fa" stroke="#1f3555" strokeWidth=".7" />
      <circle cx="2.500" cy="12.500" r="2.200" fill="#f0f4fa" stroke="#1f3555" strokeWidth=".7" />
      <circle cx="13.500" cy="12.500" r="2.200" fill="#f0f4fa" stroke="#1f3555" strokeWidth=".7" />
    </>
  ),
  helpRound: (
    <>
      <circle cx="8" cy="8" r="7.300" fill="#f2f6fb" stroke="#2a3b55" />
      <path d="M5.500 6.200q0-2.700 2.500-2.700t2.500 2.500Q10.500 7.500 8 9v1M8 11.500v1.800" fill="none" stroke="#1c4d94" strokeWidth="1.900" />
    </>
  ),
  min: <path d="M4 12.500h8" stroke="#fff" strokeWidth="2" />,
  restore: <path d="M5 7V3h10v6h-4M2 8h9v6H2zM2 9h9M5 4h10" fill="none" stroke="#fff" strokeWidth="1.300" />,
  close: <path d="M3 3l10 10M13 3L3 13" stroke="#fff" strokeWidth="2.400" />,
  minDark: <path d="M3 11.500h10" stroke="#282828" strokeWidth="2" />,
  restoreDark: <path d="M6 7V3h8v6h-3M3 7h8v6H3z" fill="none" stroke="#282828" strokeWidth="1.400" />,
  closeDark: <path d="M4 4l8 8M12 4l-8 8" stroke="#282828" strokeWidth="2.400" />,
  tiny: <path d="M3 3l10 10M13 3L3 13" stroke="#3a3a3a" strokeWidth="2.200" />,
  closeTiny: <path d="M2 2l12 12M14 2L2 14" stroke="#c4c4c4" strokeWidth="2.600" />,
  plus: <path d="M8 4v8M4 8h8" stroke="#cfcfcf" strokeWidth="2" />,
  wrench: (
    <path d="M1 4.500l3 2 2.500-2L5 1.500q4-.5 5 2.500 0 1.500-.5 2.500l6 6-2 2.500-6-6Q2 10 1 4.500z" fill="#eee" stroke="#333" strokeWidth=".5" />
  ),
  prompt: (
    <>
      <path d="M1.500 1.500h13v13h-13z" fill="#e6eaf0" stroke="#8d939b" />
      <path d="M4 5l3 3-3 3M8.500 11.500H12" fill="none" stroke="#333" strokeWidth="1.300" />
    </>
  ),
  gridLines: <path d="M3.500 1v14M7 1v14M10.500 1v14M14 1v14M1 3.500h15M1 8h15M1 12.500h15" stroke="#c4c4c4" strokeDasharray="2 1" />,
  gridDots: <path d="M1 1.500h14M1 4.500h14M1 7.500h14M1 10.500h14M1 13.500h14" stroke="#c4c4c4" strokeDasharray="1 2" />,
  ortho: <path d="M3 1v12.500h12M3 8h5v5" fill="none" stroke="#2a8fe8" strokeWidth="1.500" />,
  polar: <><circle cx="7" cy="8.500" r="6" fill="none" stroke="#b9b9b9" strokeWidth="1.300" /><path d="M7 8.500H16M7 8.500l5-6M11 5l2 6" stroke="#b9b9b9" fill="none" /></>,
  iso: <><path d="M0 0l16 16" stroke="#b9b9b9" strokeWidth="1.200" /><path d="M8 0v5M8 9v7M1 5h3" stroke="#b9b9b9" /></>,
  gear: (
    <>
      <circle cx="8" cy="8" r="4.300" fill="none" stroke="#f0f0f0" strokeWidth="3" />
      <circle cx="8" cy="8" r="6.500" fill="none" stroke="#f0f0f0" strokeWidth="2" strokeDasharray="2.600 2.500" />
    </>
  ),
  wsHome: (
    <>
      <path d="M0 2.500h16M0 14h16M2.500 0v16M13.500 0v16" stroke="#ddd" strokeDasharray="2 1" />
      <path d="M3.500 8L8 4l4.500 4v5h-9z" fill="#8f99a8" stroke="#222" />
    </>
  ),
  shapes: <path d="M1 1.500h6v6H1zM8 8.500l4 6.500H4zM12 4a2.500 2.500 0 1 1 0 5 2.500 2.500 0 0 1 0-5z" fill="none" stroke="#c9c9c9" strokeWidth="1.200" />,
  hw: <><circle cx="8" cy="8" r="7.500" fill="#0a64b4" stroke="#0a3d73" /><path d="M5 11l6-6M8 8l2 2" stroke="#56b0ff" strokeWidth="1.200" /></>,
  trusted: (
    <>
      <path d="M1 1h6v7H1z" fill="#e8eef5" />
      <path d="M4 4h9l2 5H6z" fill="#4c90d4" />
      <path d="M1 9h9v4H1z" fill="#f5c822" />
      <path d="M7 12l2.500 3L15 9" fill="none" stroke="#39a31a" strokeWidth="2.400" />
    </>
  ),
  full: <><path d="M.5 2.500h15v11H.5z" fill="#5c5c5c" stroke="#ddd" /><path d="M9 8l4-3.500M10 4.500h3V7M7 8.500L3.500 12M3.500 9.500V12H6" fill="none" stroke="#fff" /></>,
  menu: <path d="M1 2.500h14M1 8h14M1 13.500h14" stroke="#c9c9c9" strokeWidth="1.600" />,

  flag: (
    <>
      <path d="M2 1v14" stroke="#fff" strokeWidth="1.600" />
      <path d="M3 2q3-2 5 0t5 0v7q-3 2-5 0T3 9z" fill="#f4f4f4" stroke="#555" strokeWidth=".5" />
      <circle cx="11" cy="11" r="4.500" fill="#d43a35" />
      <path d="M9 9l4 4M13 9l-4 4" stroke="#fff" strokeWidth="1.400" />
    </>
  ),
  plug: (
    <>
      <path d="M1.500 3h8v12h-8zM4 1h3v2H4z" fill="#8294a9" stroke="#fff" strokeWidth="1.300" />
      <path d="M8 6h7v4l-2 2h-3L8 10zM10 2v4M13 2v4M11.500 12v3H8" fill="#fff" stroke="#fff" />
    </>
  ),
  speaker: (
    <>
      <path d="M2 6h2l4-4v12l-4-4H2z" fill="#f8f8f8" stroke="#555" strokeWidth=".5" />
      <path d="M10.500 5q2 3 0 6M13 3q3 5 0 10" fill="none" stroke="#fff" />
    </>
  ),
  bars: <path d="M1 12h2v3H1zM4 10h2v5H4zM7 7.500h2V15H7zM10 5h2v10h-2zM13 2h2v13h-2z" fill="#fff" stroke="#556" strokeWidth=".4" />,
};

const Icon = ({ name, size = 16 }) => (
  <svg width={size} height={size} viewBox="0 0 16 16" aria-hidden="true">
    {icons[name]}
  </svg>
);

/* ---------- toolbar building blocks ---------- */

function Tools({ names }) {
  return names.map((name, i) => {
    if (name === "|") return <Sep key={i} />;
    if (name === "v") {
      return (
        <Drop key={i} aria-label="more">
          <Caret $color="#2e2e2e" />
        </Drop>
      );
    }
    return (
      <ToolButton key={name} aria-label={name}>
        <Icon name={name} />
      </ToolButton>
    );
  });
}

function Combo({ width, label, value, before, indent, disabled }) {
  return (
    <ComboBox $width={width} $disabled={disabled}>
      {before}
      <ComboSelect aria-label={label} defaultValue={value} $indent={indent} disabled={disabled}>
        <option>{value}</option>
      </ComboSelect>
      <Caret $color={disabled ? "#999" : "#000"} $big />
    </ComboBox>
  );
}

/* ---------- drawing helpers ---------- */

const rng = (seed) => {
  let s = seed * 7919 + 13;
  return () => {
    s = (s * 16807) % 2147483647;
    return s / 2147483647;
  };
};

// broken strokes that stand in for lettering too small to read
const lettering = (seed, x, y, w, h) => {
  const r = rng(seed);
  let d = "";
  let cx = x;
  while (cx < x + w) {
    const len = 2 + Math.round(r() * 5);
    d += `M${cx} ${y}h${Math.min(len, x + w - cx)}`;
    if (r() > 0.25) d += `M${cx + 1} ${y - h / 2}v${h}`;
    if (r() > 0.5) d += `M${cx + 2} ${y - h / 2}h2`;
    cx += len + (r() > 0.75 ? 1 : 0);
  }
  return d;
};

const Lettering = ({ seed, x, y, w, h = 2, color = N, rot }) => (
  <path
    d={lettering(seed, x, y, w, h)}
    stroke={color}
    fill="none"
    shapeRendering={rot ? "auto" : "crispEdges"}
    transform={rot ? `rotate(${rot} ${x} ${y})` : undefined}
  />
);

const NoteColumn = ({ seed, x, y, w, rows, step, right }) => {
  const r = rng(seed);
  return Array.from({ length: rows }, (_, i) => {
    const cut = r() > 0.5 ? Math.round(r() * w * 0.3) : 0;
    if (r() < 0.1) return null;
    return (
      <g key={i}>
        <Lettering seed={seed + i * 3} x={right ? x + cut : x} y={y + i * step} w={w - cut} h={r() > 0.6 ? 3 : 2} />
        {r() > 0.85 && <path d={`M${x + w / 2} ${y + i * step}h${6 + cut / 3}`} stroke="#fff" strokeWidth="1.500" />}
      </g>
    );
  });
};

const Boxed = ({ seed, x, y, w, h, color = "#00a800" }) => (
  <>
    <rect x={x} y={y} width={w} height={h} fill="none" stroke={color} />
    <Lettering seed={seed} x={x + 2} y={y + h / 2} w={w - 4} h={3} />
  </>
);

const Sheet = ({ top, bottom }) => (
  <g fill="none" shapeRendering="crispEdges">
    <path d={`M720.5 ${top}V${bottom}M940.5 ${top}V${bottom}M719 ${bottom - 0.5}H941`} stroke="#dcd2dc" />
    <path d={`M722.5 ${top}V${bottom}M722 ${bottom - 2.5}H938`} stroke={M} />
    <path d={`M938 ${top}V${bottom}M722 ${top + 2}H938`} stroke="#b010b0" strokeWidth="2" />
    <path
      d={`M724.5 ${bottom - 4}V${top + 10}H729.5V${top + 4.5}H930.5V${top + 9.5}H935.5V${bottom - 10}H930.5V${bottom - 4.5}H724.5`}
      stroke="#d0d0d0"
    />
    <path d={`M730 ${top + 3.5}h17v3h-17z`} stroke="#fff" />
  </g>
);

const TitleBlock = ({ x, y, seed }) => (
  <g fill="none" shapeRendering="crispEdges">
    <Lettering seed={seed} x={x} y={y - 2} w={42} h={3} color={Y} />
    <path d={`M${x} ${y}h43v26h-43z`} stroke={R} />
    <path d={`M${x} ${y + 3}h43`} stroke="#c6a018" strokeWidth="2" />
    <path d={`M${x} ${y + 6}h39`} stroke={N} />
    <path d={`M${x} ${y + 10}h43M${x} ${y + 13}h43M${x} ${y + 20}h43M${x + 17} ${y + 10}v16M${x + 38} ${y}v26`} stroke="#d80000" />
    <path d={`M${x} ${y + 15}h17M${x} ${y + 18}h17M${x} ${y + 21}h17M${x} ${y + 24}h17M${x + 6} ${y + 14}v12M${x + 12} ${y + 14}v12`} stroke="#c8bc00" />
    <Lettering seed={seed + 1} x={x + 29} y={y + 13} w={8} h={3} color={Y} />
    <Lettering seed={seed + 2} x={x + 18} y={y + 17} w={8} />
    <Lettering seed={seed + 3} x={x + 39} y={y + 23} w={4} color={Y} />
  </g>
);

const Frame = ({ x, y }) => (
  <g transform={`translate(${x} ${y})`} fill="none">
    <path d="M0 76V13L52 0 104 13V76M3 75L7 19 52 8 97 19l4 56" stroke={R} strokeWidth="1.400" />
    <path
      d="M1 14l6 5-4 8 3 8-4 8 3 8-4 8 3 8-3 9M103 14l-6 5 4 8-3 8 4 8-3 8 4 8-3 8 3 9M0 14l8 1 4 4 12-8 8 6 12-11 8 2V0v8l8-2 12 11 8-6 12 8 4-4 8-1M18 10l1 6M34 5v5M70 5v5M86 10l-1 6"
      stroke="#eee"
      strokeWidth="1.500"
    />
    <Lettering seed={4} x={22} y={5} w={16} h={3} color={C} rot={-14} />
    <Lettering seed={5} x={26} y={16} w={15} h={3} color={C} rot={-14} />
    <Lettering seed={6} x={8} y={48} w={16} h={3} color={C} rot={-90} />
    <Lettering seed={8} x={-2} y={50} w={14} h={3} color={C} rot={-90} />
  </g>
);

const lerp = (a, b, t) => [a[0] + (b[0] - a[0]) * t, a[1] + (b[1] - a[1]) * t];

const SteelHall = () => {
  const far = [[725, 179], [738, 170], [754, 171]];
  const near = [[800, 227], [822, 212], [841, 211]];
  const lines = [];
  for (let i = 0; i <= 10; i += 1) {
    const seg = i <= 5 ? 0 : 1;
    const t = (i - seg * 5) / 5;
    lines.push([lerp(far[seg], far[seg + 1], t), lerp(near[seg], near[seg + 1], t)]);
  }
  const feet = [[728, 197], [735, 201], [742, 207], [750, 213], [759, 220], [769, 227], [781, 237], [795, 247]];
  return (
    <g stroke="#f0f000" fill="none">
      {lines.map(([a, b], i) => (
        <path key={i} d={`M${a}L${b}`} strokeWidth="1.500" />
      ))}
      {feet.map((f, i) => {
        const t = i / 7;
        const a = lerp(far[0], near[0], t);
        const b = lerp(far[1], near[1], t);
        const c = lerp(far[2], near[2], t);
        return (
          <g key={i}>
            <path d={`M${a}L${b}L${c}`} strokeWidth="2" />
            <path d={`M${a}L${f}`} strokeWidth="2.600" />
            <path d={`M${c}l-4 ${12 + i}`} strokeWidth="1.500" stroke="#c8c800" />
          </g>
        );
      })}
      <path d="M841 211l-9 21M834 214l-11 31M800 227l11 33 14-38M795 247l35-22M797 243l14 17 12-15M800 227l23 18" strokeWidth="2" />
      <path d="M751 192l12 20M750 213l7-24" strokeWidth="1.200" />
      <path d="M750 193l15-6M758 198l4-13M764 186h20" stroke={N} />
    </g>
  );
};

const Plan = () => {
  const rows = [302, 322.5, 343, 364, 384.5, 405, 426, 441, 462];
  return (
    <g fill="none">
      <path d="M559.500 268.500h141v233h-141zM546.500 502h154v108.500h-154z" stroke="#00c800" strokeWidth="1.300" />
      <path d="M607.500 300V463M611.500 299V463M614.500 302V461M656.500 302V445M659.500 300V468H611.500V463M611 300h49M613 303h45M612 461l47-17M614 463l45-17" stroke="#e80000" />
      {rows.map((y, i) => (
        <g key={y}>
          <circle cx="596" cy={y} r="5.500" stroke="#d9d900" strokeWidth="1.500" />
          <path d={`M601.5 ${y}h6`} stroke={Y} />
          <DrawText x="596" y={y} transform={`rotate(-90 596 ${y})`} dy="3">{i + 1}</DrawText>
          <path d={`M611.5 ${y}h3M656.5 ${i === 8 ? 442 : y}h3`} stroke={M} strokeWidth="3" />
          {i < 8 && <path d={`M607 ${y + 9}v4`} stroke={Y} strokeWidth="2" />}
        </g>
      ))}
      {[[613, "A"], [658.5, "B"]].map(([x, t]) => (
        <g key={t}>
          <circle cx={x} cy="289.500" r="5.500" stroke="#d9d900" strokeWidth="1.500" />
          <path d={`M${x} 295v5`} stroke={Y} strokeWidth="1.500" />
          <DrawText x={x} y="292.500">{t}</DrawText>
        </g>
      ))}
      <path d="M633 299h5M633 467h5" stroke={Y} strokeWidth="2" />
      <path d="M651 445h8M635 302h2" stroke={N} strokeWidth="2" />
      <Lettering seed={20} x={610} y={487} w={24} h={4} color={Y} />
      <path d="M622 489h32" stroke={Y} strokeWidth="1.500" />
      <path d="M622 491.500h33" stroke="#bbb" />

      <path d="M607 515.500h31v20h-31zM650.500 515.500h31v20h-31z" stroke="#e6e600" strokeWidth="1.500" />
      <path d="M606 512h32M645 512v24M648 509h37M681 516l22 .5M681 523h23M681 532h22M631 515l6 6M676 520l5-5" stroke="#c8c800" />
      <path d="M648.500 512.500h36v26h-36zM643.500 543.500h46v-4" stroke={R} />
      <path d="M643 538.500h47" stroke="#fff" />
      <path d="M646 547.500h44" stroke={N} strokeWidth="1.500" />
      <path d="M646 549h44" stroke="#c00000" />
      <Lettering seed={21} x={650} y={545} w={16} color="#d0a000" />
      <Lettering seed={22} x={687} y={515} w={7} h={3} color={Y} />
      <Lettering seed={23} x={687} y={522} w={12} h={3} color={Y} />
      <Lettering seed={24} x={687} y={533} w={6} h={3} color={Y} />
      <path d="M619 511h4M665 508h4M643 526v3" stroke={Y} strokeWidth="2" />
      <path d="M614.500 549v24.500h11M617.500 549v22h8" stroke={C} />
      <path d="M611.500 549v31M615 549v8" stroke="#fff" strokeWidth="2" strokeDasharray="3 1" />
      <path d="M613 551v26M614 577h11" stroke={M} />
      <path d="M628.500 549v25" stroke="#c00000" />
      <Lettering seed={25} x={616} y={560} w={5} h={3} color={Y} />
      <Lettering seed={26} x={628} y={573} w={29} h={3} color={C} />
      <Lettering seed={27} x={611} y={581} w={8} h={3} color={C} />
      <path d="M612 583.500h10" stroke="#0000ff" />
      <g transform="translate(668 590) scale(.75)">
        <TitleBlock x={0} y={0} seed={30} />
      </g>
    </g>
  );
};

const Drawing = () => (
  <DrawingSvg viewBox="29 156 1305 485" preserveAspectRatio="xMidYMid slice">
    <Plan />

    <Sheet top={130} bottom={296} />
    <g fill="none">
      <Boxed seed={40} x={732.5} y={153.5} w={104} h={9} />
      <Boxed seed={41} x={757.5} y={165.5} w={76} h={5} />
      <Boxed seed={42} x={772.5} y={173.5} w={63} h={5} />
      <Boxed seed={43} x={797.5} y={181.5} w={25} h={5} />
      <Boxed seed={44} x={797.5} y={187.5} w={43} h={4} />
      <NoteColumn seed={51} x={837} y={158} w={44} rows={17} step={3.5} />
      <NoteColumn seed={52} x={887} y={158} w={43} rows={39} step={3} right />
      <NoteColumn seed={53} x={837} y={234} w={44} rows={20} step={3} right />
      <Boxed seed={45} x={893.5} y={278.5} w={38} h={6} />
      <Boxed seed={46} x={891.5} y={285.5} w={34} h={6} />
      <SteelHall />
      <TitleBlock x={724.5} y={265.5} seed={31} />
    </g>

    <Sheet top={296} bottom={450} />
    <g fill="none">
      <Frame x={727} y={302} />
      <path d="M727 377.500h104M834 317v60" stroke="#d00000" strokeDasharray="3 1" />
      <Lettering seed={60} x={776} y={377} w={5} h={3} color={Y} />
      <Lettering seed={61} x={833} y={346} w={8} h={3} color={Y} rot={-90} />
      <Lettering seed={62} x={761} y={385} w={23} h={5} />
      <path d="M749 388.500h35M749 392.500h35" stroke={C} />
      <Lettering seed={63} x={750} y={390} w={33} color={Y} />
      <Frame x={826} y={370} />
      <path d="M878.500 378v67M876.500 378v67M881 380l5-1" stroke="#00b400" strokeWidth="1.500" />
      <path d="M888.500 382v62M933 384v61" stroke="#d00000" strokeDasharray="3 1" />
      <circle cx="883" cy="381" r="2" fill={N} />
      <Lettering seed={64} x={887} y={415} w={7} h={3} color={Y} rot={-90} />
      <Lettering seed={65} x={932} y={418} w={7} h={3} color={Y} rot={-90} />
      <Lettering seed={66} x={875} y={420} w={18} h={3} color={C} rot={-90} />
      <path d="M881.500 440.500h14v3h-14z" stroke={N} />
      <path d="M882 442h12" stroke={Y} />
      <Lettering seed={67} x={770} y={434} w={54} h={5} />
      <path d="M782 436.500h35M782 440.500h35" stroke={C} />
      <Lettering seed={68} x={784} y={438} w={30} color={Y} />
      <TitleBlock x={724.5} y={419.5} seed={32} />

      <path d="M845.500 310.500h43v39h-43zM890.500 309.500h37v36h-37z" stroke="#00a800" />
      <path d="M854.500 319.500h15v15h-15zM897.500 318.500h13v13h-13z" stroke={N} />
      <path d="M857 321l11 12M868 321l-11 12M862.500 319v16M855 327.500h15M851.500 319v16M855 316.500h15M897 315.500h13" stroke={R} strokeDasharray="2 1" />
      <circle cx="862" cy="327" r="4" stroke={R} />
      <path d="M899.500 320.500h9v9h-9M899 324.500h25M897 328.500h12" stroke={N} />
      <path d="M860 340h9v4h-9z" fill={Y} />
      <path d="M861 345h7" stroke={R} strokeWidth="2" />
      <path d="M870 321l6-4M866 334l4 6M903 331l6 5M897 333h14" stroke="#c8b000" />
      <Lettering seed={70} x={875} y={318} w={11} />
      <Lettering seed={71} x={871} y={333} w={12} />
      <Lettering seed={72} x={909} y={322} w={17} />
      <circle cx="906" cy="337" r="2" stroke={N} />
      <path d="M861.500 352.500h78v16h-78z" stroke="#00b400" />
      <Lettering seed={73} x={868} y={359} w={66} h={4} />
      <Lettering seed={74} x={861} y={363} w={76} h={3} />
      <Lettering seed={75} x={861} y={366} w={76} h={3} />
    </g>

    <Sheet top={450} bottom={603} />
    <g fill="none">
      <path d="M765.500 462v110" stroke="#d00000" />
      <path d="M777 462V587M779 466v120M788 473l-7 112M790 473l-7 112M775 462l15 12" stroke="#e00000" strokeWidth="1.600" />
      <path d="M785 462l-4 120" stroke={M} />
      <path d="M777 475l11 9-11 20 9 20-8 22 6 20-4 20" stroke="#ddd" strokeWidth="1.400" />
      <path d="M779 466l8 9M787 485l-9 14M785 532l-6 13" stroke="#d0b000" strokeWidth="1.500" />
      <Lettering seed={80} x={776} y={458} w={23} h={5} color="#c040ff" />
      <Lettering seed={81} x={794} y={496} w={24} h={5} color={M} />
      <Lettering seed={82} x={802} y={471} w={15} color={C} />
      <path d="M788 470h16M788 472l20 22M891 461l17 10M786 588l28 9" stroke="#00b400" />
      <path d="M792 481h9M891 460h15" stroke={Y} strokeWidth="3" />
      <path d="M765 523v4" stroke={Y} strokeWidth="2" />
      <path d="M806 491L909 465M818 501L909 479" stroke="#f00000" strokeWidth="2" />
      <path d="M812 498L932 467" stroke={M} />
      <path d="M819 501v-13l23 7 18-17 22 6 27-18v13M842 495l-2-11M882 484l-2-10" stroke="#fff" strokeWidth="1.800" />
      <DrawText x="864" y="474" transform="rotate(-14 864 474)" $fill={C}>BOXDBXDX3</DrawText>
      <DrawText x="871" y="495" transform="rotate(-14 871 495)" $fill={C}>BOXDBXDX3</DrawText>
      <DrawText x="775" y="527" transform="rotate(-90 775 527)" $fill={C}>BOXDBXDX</DrawText>
      <DrawText x="789" y="524" transform="rotate(95 789 524)" $fill={C}>BOXDBXDX</DrawText>
      <path d="M867 502.500h19M867 505.500h19" stroke={C} />
      <Lettering seed={83} x={870} y={504} w={14} color={Y} />
      <path d="M857 526l52-10 2 10-53 10zM857 526l-3-9M868 523l2-9" stroke="#d0d000" />
      <path d="M857 526l2 10M909 516l2 10" stroke={R} strokeWidth="1.400" />
      <path d="M853 517h10l8-3h18M862 517l9 5" stroke="#00b400" />
      <Lettering seed={84} x={869} y={543} w={12} h={4} />
      <path d="M867 545.500h17" stroke="#d000a0" />
      <path d="M804.500 541.500h13v13h-13zM808.500 544.500h6v7h-6zM811.500 541v14M805 548.500h13" stroke={N} />
      <path d="M802 542v12M807 539h10M811 562v3" stroke={R} strokeWidth="2" strokeDasharray="2 1" />
      <path d="M810 557h8v4h-8z" fill={Y} />
      <Lettering seed={85} x={822} y={540} w={10} />
      <Lettering seed={86} x={820} y={552} w={10} />
      <path d="M805.500 564.500h56v34h-56z" stroke="#c000c0" />
      <path d="M815.500 571.500h26v13h-26z" stroke={M} strokeDasharray="2 1" />
      <circle cx="824" cy="577.500" r="3" stroke={R} strokeWidth="2" />
      <circle cx="834" cy="577.500" r="3" stroke={R} strokeWidth="2" />
      <path d="M814 568.500h32M812.500 572v12" stroke="#00b400" strokeDasharray="3 1" />
      <path d="M819 590h18v4h-18zM825 594h6v4h-6z" fill={R} />
      <Lettering seed={87} x={841} y={572} w={19} color={Y} />
      <Lettering seed={88} x={838} y={577} w={17} />
      <path d="M833 583l4 7" stroke={Y} />
      <path d="M861.500 572.500h78v16h-78z" stroke="#00a000" />
      <Lettering seed={89} x={867} y={579} w={68} h={3} />
      <path d="M771 592.500h18M771 595.500h18" stroke={C} />
      <path d="M774 594h12" stroke={Y} />
      <Lettering seed={90} x={776} y={590} w={10} />
      <TitleBlock x={724.5} y={572.5} seed={33} />
    </g>

    <Sheet top={603} bottom={760} />
    <g fill="none" stroke="#f0f000">
      <path d="M745 618l10-8h14l60 27M745 618l45 24M748 614l60 30M752 611l66 30M760 611l62 28M766 610l50 30" strokeWidth="1.500" />
      <path d="M746 618l3 16M752 617l4 20M759 622l3 16M768 624l3 17M777 628l2 14M786 632l2 10M755 610l-3 10M765 611l-6 12M775 614l-7 13M785 619l-8 13M795 623l-8 14M806 628l-8 12M817 633l-6 8" strokeWidth="2.200" />
      <path d="M828 626h10M827 633l-5 5" strokeWidth="2.400" />
      <circle cx="833" cy="628" r="4.500" strokeDasharray="1 1" />
    </g>

    <g stroke="#e8e8e8" fill="none" shapeRendering="crispEdges">
      <path d="M42.500 577v50h50M38.500 622.500h9v9h-9z" />
      <path d="M1092 317.500h31M1130 317.500h31M1126.500 283v31M1126.500 321v31M1123.500 314.500h6v6h-6z" />
    </g>
    <path d="M44 560l6 6 6-6M50 566v7M97 613l13 13M110 613l-13 13" stroke="#d8d8d8" strokeWidth="1.200" fill="none" />
  </DrawingSvg>
);

const ViewCube = () => (
  <svg width="92" height="92" viewBox="0 0 92 92">
    <circle cx="46" cy="46" r="37" fill="none" stroke="#434b58" strokeWidth="8" />
    <CubeLetter x="46" y="13">N</CubeLetter>
    <CubeLetter x="46" y="90">S</CubeLetter>
    <CubeLetter x="8" y="51">W</CubeLetter>
    <CubeLetter x="84" y="51">E</CubeLetter>
    <rect x="28.500" y="28.500" width="35" height="35" fill="#b4b4b4" stroke="#8c8c8c" />
    <rect x="35" y="35" width="22" height="22" fill="#a0a8ac" />
    <CubeTop x="46" y="49">TOP</CubeTop>
  </svg>
);

const NavArt = () => (
  <svg width="31" height="212" viewBox="0 0 31 212" fill="none" stroke="#3f454d">
    <circle cx="26" cy="5" r="3.500" fill="#4d535b" />
    <path d="M24 3l4 4M28 3l-4 4" stroke="#777d85" />
    <path d="M16 19h10v10a10.500 10.500 0 1 1-10-10z" />
    <circle cx="16" cy="30" r="6" />
    <path d="M14 49h5l-2.500 3zM14 119h5l-2.500 3zM14 157h5l-2.500 3z" fill="#3f454d" stroke="none" />
    <path d="M4 56.500h25M4 164.500h25" stroke="#686e77" />
    <path d="M12 83q-3-5-7-9 0-3 3-2l4 4-3-10q1-3 3 0l2 7-1-10q2-3 3 0l1 10 1-9q2-2 3 0l-1 10 3-7q2-1 2 1l-3 10-2 5z" />
    <path d="M5 90l14 14M19 90L5 104M5 95v-5h5M14 90h5v5M5 99v5h5" strokeWidth="1.400" />
    <circle cx="20" cy="104" r="5" fill="#5b6068" />
    <path d="M24 108l4 4" strokeWidth="2.500" />
    <path d="M14 150V135h-3l5-7 4 7h-2v15zM12 136q-8 1-8 5 1 5 12 5t11-5q-1-4-8-5M7 147l-2-4h5" />
    <path d="M5 170h5v6H5zM13 170h5v6h-5zM21 170h6v6h-6zM5 179h16v13H5z" />
    <path d="M10 181l7 4.500-7 4z" fill="#3f454d" />
    <circle cx="26" cy="206" r="3.500" fill="#4d535b" />
    <path d="M24 205h4M24 207h4" stroke="#777d85" />
  </svg>
);

/* ---------- big pictures ---------- */

const AcadLogo = ({ size }) => (
  <svg width={size} height={size} viewBox="0 0 26 26" aria-hidden="true">
    <path d="M9 1h7l9 23h-6l-3-5q-4-2-8 1l-2 4H1z" fill="#c3221f" />
    <path d="M9 1l2 0-5 20-5 3z" fill="#8e1512" />
    <path d="M12 7l4 9q-4-1-7 1z" fill="#a89c9c" />
    <path d="M16 1l9 23h-3L13 4z" fill="#e24a3f" />
    <path d="M6 20q7-6 12-1l2 5q-6-6-14 0z" fill="#a81a17" />
  </svg>
);

const taskArt = {
  start: (
    <svg width="38" height="38" viewBox="0 0 38 38">
      <defs>
        <radialGradient id="orb" cx=".5" cy=".8" r=".8">
          <stop offset="0" stopColor="#4fc6ee" />
          <stop offset=".5" stopColor="#1d5c90" />
          <stop offset="1" stopColor="#173450" />
        </radialGradient>
      </defs>
      <circle cx="19" cy="19" r="17.500" fill="url(#orb)" stroke="#24415e" strokeWidth="1.500" />
      <path d="M3 15a16 16 0 0 1 32 0q-16 6-32 0z" fill="#9cc0da" opacity=".55" />
      <path d="M11 10q4-3 8-1l-2 8q-4-2-8 0z" fill="#ee5a24" />
      <path d="M20 10q4 2 9-1l-3 9q-4 2-8 0z" fill="#8cc63e" />
      <path d="M9 19q4-2 8 0l-2 8q-4-2-8 0z" fill="#3fa4e8" />
      <path d="M18 19.500q4 2 8 0l-2 8q-4 2-8 0z" fill="#fdc92d" />
    </svg>
  ),
  ie: (
    <svg width="32" height="32" viewBox="0 0 32 32">
      <path d="M17 6q12 0 12 13H12q1 5 6 5 3 0 4-2h6q-2 8-11 8Q5 30 5 18T17 6zM12 15h10q-1-4-5-4t-5 4z" fill="#3db4ee" stroke="#1b79bd" strokeWidth=".8" fillRule="evenodd" />
      <path d="M5 30Q-2 27 8 14T26 2q6-2 3 6 0-4-4-3-8 3-14 10T5 30z" fill="#f5c52a" stroke="#c38f10" strokeWidth=".5" />
    </svg>
  ),
  explorer: (
    <svg width="34" height="32" viewBox="0 0 34 32">
      <path d="M2 4l2-2h7l2 3h18v21H2z" fill="#f4dc85" stroke="#b9963c" />
      <path d="M6 2h4v3H6zM14 4h4v3h-4zM22 6h4v3h-4z" fill="#fff" />
      <path d="M6 2h3v1.500H6z" fill={G} />
      <path d="M13 4h3v1.500h-3z" fill="#d33" />
      <path d="M21 6h4v1.500h-4z" fill="#27e" />
      <path d="M2 9h30v18H2z" fill="#f9e9a5" stroke="#c8a750" />
      <path d="M6 31V20h22v11h-5v-6H11v6z" fill="#a6dcf2" stroke="#5fa5c8" />
    </svg>
  ),
  wmp: (
    <svg width="30" height="28" viewBox="0 0 30 28">
      <path d="M3 2h22v23H3z" fill="#a3cbe8" stroke="#5b8fb5" />
      <path d="M25 3l2 1v22l-4-1" fill="none" stroke="#4b81aa" />
      <circle cx="13" cy="14" r="9" fill="#f27e1d" />
      <path d="M10 8l9 6-9 6z" fill="#fff" />
    </svg>
  ),
  acad: <Plate><AcadLogo size={26} /></Plate>,
  paint: (
    <svg width="34" height="32" viewBox="0 0 34 32">
      <path d="M3 17q2-10 14-10t13 9q0 6-8 5-4 0-4 4 0 5-8 3-8-3-7-11z" fill="#d6e3ef" stroke="#7d9bb5" />
      <circle cx="7" cy="18" r="2.500" fill="#d43c2f" />
      <circle cx="12" cy="12" r="2.500" fill="#43a02a" />
      <circle cx="19" cy="10" r="2.500" fill="#f2b51d" />
      <circle cx="14" cy="20" r="2.200" fill="#2d7cc4" />
      <path d="M19 30l9-22" stroke="#e8892b" strokeWidth="3" />
      <path d="M26 9l2-8 5 2-4 8z" fill="#b98b56" />
    </svg>
  ),
  chrome: (
    <svg width="32" height="32" viewBox="0 0 32 32">
      <circle cx="16" cy="16" r="15" fill="#fbc11e" />
      <path d="M16 16L3 8.500A15 15 0 0 1 29 8.500H16z" fill="#dd4b3e" />
      <path d="M3 8.500A15 15 0 0 0 15 31l7-11-6-4z" fill="#1f9d58" />
      <circle cx="16" cy="16" r="7" fill="#fff" />
      <circle cx="16" cy="16" r="5.500" fill="#4587f3" />
    </svg>
  ),
  excel: (
    <svg width="30" height="32" viewBox="0 0 30 32">
      <path d="M15 5h14v22H15z" fill="#fff" stroke="#207245" />
      <path d="M19 9h8M19 13h8M19 17h8M19 21h8M19 25h8" stroke="#207245" strokeWidth="2" strokeDasharray="5 1" />
      <path d="M0 4l18-3v30L0 28z" fill="#207245" />
      <path d="M5 11l7 10M12 11L5 21" stroke="#fff" strokeWidth="2.400" />
    </svg>
  ),
  firefox: (
    <svg width="32" height="32" viewBox="0 0 32 32">
      <path d="M2 13q1-5 4-7l1 4 3-2 3-3v4l4-1q1-6 5-8-1 4 4 7 6 5 5 12-1 12-15 12Q2 30 2 13z" fill="#ff8a1e" />
      <path d="M21 0q-1 4 4 8 7 6 5 13-2 7-8 9 6-8 2-14-5-5-6-8 0-5 3-8z" fill="#ffd43b" />
      <path d="M2 15q0 15 14 16 8 0 12-6-8 3-14-1Q8 20 9 12q-4 4-7 3z" fill="#f2374e" />
      <circle cx="16.500" cy="17" r="6.500" fill="#7a46c4" />
      <path d="M9 14q4-4 9 0-5 0-5 4z" fill="#ffab32" />
    </svg>
  ),
  calcApp: (
    <svg width="24" height="32" viewBox="0 0 24 32">
      <rect x="1" y="1" width="22" height="30" rx="2" fill="#d5e4f2" stroke="#6d95bd" />
      <path d="M3 3h18v10H3z" fill="#e9ecdc" stroke="#86a2be" />
      <path d="M3 3.500h18" stroke="#f0a93a" strokeWidth="2" />
      <path d="M15 7h3v5h-3z" fill="none" stroke="#456" />
      <path d="M3 17h18M3 21h18M3 25h18M3 28h18" stroke="#7b9cc0" strokeWidth="2.200" strokeDasharray="2.500 1.200" />
      <path d="M18 24h3v5h-3z" fill="#f08b2d" />
    </svg>
  ),
  word: (
    <svg width="30" height="32" viewBox="0 0 30 32">
      <path d="M15 5h14v22H15z" fill="#fff" stroke="#2a5699" />
      <path d="M18 9h9M18 12h9M18 15h9M18 18h9M18 21h9M18 24h9" stroke="#2a5699" />
      <path d="M0 4l18-3v30L0 28z" fill="#2a5699" />
      <path d="M4 12l2 9 3-8 3 8 2-9" fill="none" stroke="#fff" strokeWidth="2" />
    </svg>
  ),
  eset: (
    <svg width="34" height="34" viewBox="0 0 34 34">
      <path d="M17 2q15 0 15 15T17 32 2 17 17 2z" fill="#fff" stroke="#0d8f95" strokeWidth="3" />
      <path d="M10.500 18H24Q25 9 17 9t-7 9q0 7 8 7 3 0 6-1.500" fill="none" stroke="#0d8f95" strokeWidth="4" />
    </svg>
  ),
  city: (
    <svg width="32" height="32" viewBox="0 0 32 32">
      <path d="M0 0h32v28H0z" fill="#fff" />
      <path d="M0 1.500h32M0 4.500h32M0 7.500h32M0 10.500h32M0 13.500h32M0 16.500h32M0 19.500h32M0 22.500h32" stroke="#18d8e0" />
      <circle cx="5" cy="5" r="3" fill="#ffe600" />
      <path d="M0 28V24h2V20h2V14l2-3 2 3v3h3v4h2V14l3-4 3 4v8h2V15l3-4 3 4v7h2v3h3v3z" fill="#000" />
      <path d="M6 15v8M17 14v10M26 15v9M9 20v6M20 20v6" stroke="#d8c400" strokeDasharray="1 2" />
      <path d="M0 28h32v4H0z" fill="#0000d8" />
      <path d="M0 30.500h32" stroke="#18d8e0" strokeDasharray="1 1" />
    </svg>
  ),
};

/* ---------- data ---------- */

const menus = ["File", "Edit", "View", "Insert", "Format", "Tools", "Draw", "Dimension", "Modify", "Parametric", "Window", "Help", "Express", "СПДС"];

const standardTools = [
  "new", "open", "save", "|", "print", "preview", "publish", "globe", "|", "cut", "copy", "paste", "match", "block", "|",
  "undo", "v", "redo", "v", "|", "pan", "zoom", "zoomWin", "zoomPrev", "|", "props", "design", "palette", "sheets", "markup", "calc", "|", "help",
];
const dimTools = [
  "dimLinear", "dimAligned", "dimArc", "dimOrd", "|", "dimRadius", "dimJog", "dimDia", "dimAngle", "|",
  "dimQuick", "dimBase", "dimCont", "dimSpace", "dimBreak", "|", "tol", "center", "inspect", "jogLine", "|",
  "dimEdit", "dimText", "dimUpd", "|",
];
const textTools = ["mtext", "stext", "editText", "find", "spell", "textStyle", "scaleText", "justify", "convert"];
const drawTools = [
  "line", "xline", "pline", "polygon", "rect", "arc", "circle", "cloud", "spline", "ellipse", "earc", "insert", "makeBlock",
  "point", "hatch", "gradient", "region", "table", "mtext", "addSel",
];
const modifyTools = [
  "erase", "copyObj", "mirror", "offset", "array", "move", "rotate", "scale", "stretch", "trim", "extend", "breakAt",
  "breakIt", "join", "chamfer", "fillet", "blend", "explode",
];
const tasks = [
  ["ie", ""], ["explorer", "stack"], ["wmp", ""], ["acad", "active"], ["paint", "open"], ["chrome", "open"], ["excel", "open"],
  ["firefox", "open"], ["calcApp", ""], ["word", "open"], ["eset", "open"], ["city", "flash"],
];

function App() {
  return (
    <Screen>
      <GlobalStyle />
      <TitleBar>
        <AppButton aria-label="Application menu">
          <AcadLogo size={26} />
          <Caret $color="#222" $big />
        </AppButton>
        <TitleRows>
          <TitleRow>
            <QuickAccess>
              {["new", "open", "save", "saveas", "print", "undo"].map((n) => (
                <QuickButton key={n} aria-label={n}><Icon name={n} /></QuickButton>
              ))}
              <Drop aria-label="Undo list"><Caret $color="#ddd" /></Drop>
              <QuickButton aria-label="redo"><Icon name="redoDim" /></QuickButton>
              <Drop aria-label="Redo list"><Caret $color="#aaa" /></Drop>
              <Drop aria-label="Customize"><Customize /></Drop>
            </QuickAccess>
            <Title>
              <span>Autodesk AutoCAD 2018</span>
              <span>solesabokdahane9.dwg</span>
            </Title>
            <SearchArrow />
            <Search aria-label="Search" placeholder="Type a keyword or phrase" />
            <QuickButton aria-label="Find"><Icon name="binoculars" /></QuickButton>
            <SignIn>
              <Icon name="user" />
              <span>Sign In</span>
              <Caret $color="#e8e8e8" />
            </SignIn>
            <QuickButton aria-label="Store"><Icon name="cart" /></QuickButton>
            <QuickButton aria-label="A360"><Icon name="a360" /></QuickButton>
            <Drop aria-label="Connect"><Caret $color="#e8e8e8" /></Drop>
            <Rule />
            <HelpButton aria-label="Help"><Icon name="helpRound" size={18} /></HelpButton>
            <Drop aria-label="Help list"><Caret $color="#e8e8e8" /></Drop>
            <WindowButtons $gap={9}>
              {["min", "restore", "close"].map((n) => <button key={n} aria-label={n}><Icon name={n} /></button>)}
            </WindowButtons>
          </TitleRow>
          <TitleRow>
            <MenuBar>
              {menus.map((m) => <MenuItem key={m}>{m}</MenuItem>)}
            </MenuBar>
            <WindowButtons $gap={1}>
              {["minDark", "restoreDark", "closeDark"].map((n) => <button key={n} aria-label={n}><Icon name={n} /></button>)}
            </WindowButtons>
          </TitleRow>
        </TitleRows>
      </TitleBar>

      <FileTabs>
        <FileTab $width={126}>Start</FileTab>
        <FileTab $width={144} $active>
          solesabokdahane9*
          <Icon name="tiny" size={8} />
        </FileTab>
        <AddTab aria-label="New drawing"><Icon name="plus" /></AddTab>
      </FileTabs>

      <Toolbars>
        <ToolbarRow>
          <Toolbar>
            <Handle />
            <Tools names={standardTools} />
          </Toolbar>
          <Toolbar>
            <Handle />
            <Tools names={dimTools} />
            <Combo width={119} label="Dimension style" value="1-10" indent={11} />
            <Tools names={["dimStyle"]} />
          </Toolbar>
        </ToolbarRow>
        <ToolbarRow>
          <Toolbar>
            <Handle />
            <Tools names={["layerProps"]} />
            <Combo
              width={299}
              label="Layer"
              value="PLATE"
              before={
                <LayerState>
                  {["bulb", "sun", "vpFreeze", "lock"].map((n) => <Icon key={n} name={n} />)}
                  <Swatch $color="#ffbf00" />
                </LayerState>
              }
            />
            <Tools names={["layerCur", "layerPrev", "layerState"]} />
          </Toolbar>
          <Toolbar>
            <Handle />
            <Combo width={151} label="Color" value="Green" before={<LayerState><Swatch $color="#00ff00" /></LayerState>} />
            <Sep />
            <Combo width={159} label="Linetype" value="BORDER2" before={<LineSample $width={60} $dashed />} />
            <Sep />
            <Combo width={125} label="Lineweight" value="ByLayer" before={<LineSample $width={35} />} />
            <Sep />
            <Combo width={120} label="Plot style" value="ByColor" indent={6} disabled />
          </Toolbar>
          <Toolbar>
            <Handle />
            <Tools names={textTools} />
          </Toolbar>
        </ToolbarRow>
        <ToolbarRow>
          <Toolbar>
            <Handle />
            <Tools names={["textStyle"]} />
            <Combo width={119} label="Text style" value="NASHKD" indent={15} />
            <Sep $wide />
            <Tools names={["dimStyle"]} />
            <Combo width={119} label="Dim style" value="1-10" indent={13} />
            <Sep $wide />
            <Tools names={["tableStyle"]} />
            <Combo width={119} label="Table style" value="Standard" indent={1} />
            <Sep $wide />
            <Tools names={["leaderStyle"]} />
            <Combo width={119} label="Multileader style" value="Standard" indent={15} />
          </Toolbar>
        </ToolbarRow>
      </Toolbars>

      <Workspace>
        <SideBar>
          <Handle $flat />
          {drawTools.map((n) => <SideButton key={n} aria-label={n}><Icon name={n} /></SideButton>)}
        </SideBar>
        <Canvas>
          <Drawing />
          <ViewLabel>[−][Top][2D Wireframe]</ViewLabel>
          <CubePanel>
            <ViewCube />
            <Wcs>WCS <Caret $color="#757783" $big /></Wcs>
          </CubePanel>
          <NavBar><NavArt /></NavBar>
        </Canvas>
        <SideBar>
          <Handle $flat />
          {modifyTools.map((n) => <SideButton key={n} aria-label={n}><Icon name={n} /></SideButton>)}
        </SideBar>
      </Workspace>

      <CommandLine>
        <CommandTools>
          <Handle />
          <QuickButton aria-label="Close"><Icon name="close" size={12} /></QuickButton>
          <QuickButton aria-label="Customize"><Icon name="wrench" /></QuickButton>
        </CommandTools>
        <Icon name="prompt" />
        <Caret $color="#777" />
        <CommandInput aria-label="Command" placeholder="Type a command" />
      </CommandLine>

      <LayoutTabs>
        <LayoutTab $width={57} $active>Model</LayoutTab>
        <LayoutTab $width={66}>Layout2</LayoutTab>
        <AddTab $low aria-label="New layout"><Icon name="plus" /></AddTab>
        <Spacer />
        <ScrollMark />
      </LayoutTabs>

      <StatusBar>
        <StatusGroup $width={49}><StatusText>MODEL</StatusText></StatusGroup>
        <StatusGroup $width={65}>
          <Icon name="gridLines" /><Icon name="gridDots" /><Caret $color="#fff" $big />
        </StatusGroup>
        <StatusGroup $width={108}>
          <Icon name="ortho" /><Icon name="polar" /><Caret $color="#fff" $big /><Icon name="iso" /><Caret $color="#fff" $big />
        </StatusGroup>
        <Toolbar>
          <Handle />
          <Combo width={174} label="Workspace" value="AutoCAD Classic" indent={5} />
          <Tools names={["gear", "wsHome"]} />
          <TinyClose aria-label="Close toolbar"><Icon name="closeTiny" size={6} /></TinyClose>
        </Toolbar>
        <StatusGroup $width={26}><Icon name="shapes" /></StatusGroup>
        <StatusGroup $width={25}><Icon name="hw" size={18} /></StatusGroup>
        <StatusGroup $width={25}><Icon name="trusted" /></StatusGroup>
        <StatusGroup $width={50}><Icon name="full" /><Icon name="menu" /></StatusGroup>
      </StatusBar>

      <TaskBar>
        <StartButton aria-label="Start">{taskArt.start}</StartButton>
        {tasks.map(([name, state]) => (
          <TaskSlot key={name}>
            <TaskButton aria-label={name} $state={state}>{taskArt[name]}</TaskButton>
          </TaskSlot>
        ))}
        <Spacer />
        <Tray>
          <Lang>EN</Lang>
          <UpMark />
          <Icon name="flag" /><Icon name="plug" /><Icon name="speaker" /><Icon name="bars" />
        </Tray>
        <Clock>
          <span>12:18 ق.ظ</span>
          <span>۲۰۲۰/۳۰/۰۸</span>
        </Clock>
        <ShowDesktop aria-label="Show desktop" />
        <Watermark>www.asansazeh.com</Watermark>
      </TaskBar>
    </Screen>
  );
}

export default App;
